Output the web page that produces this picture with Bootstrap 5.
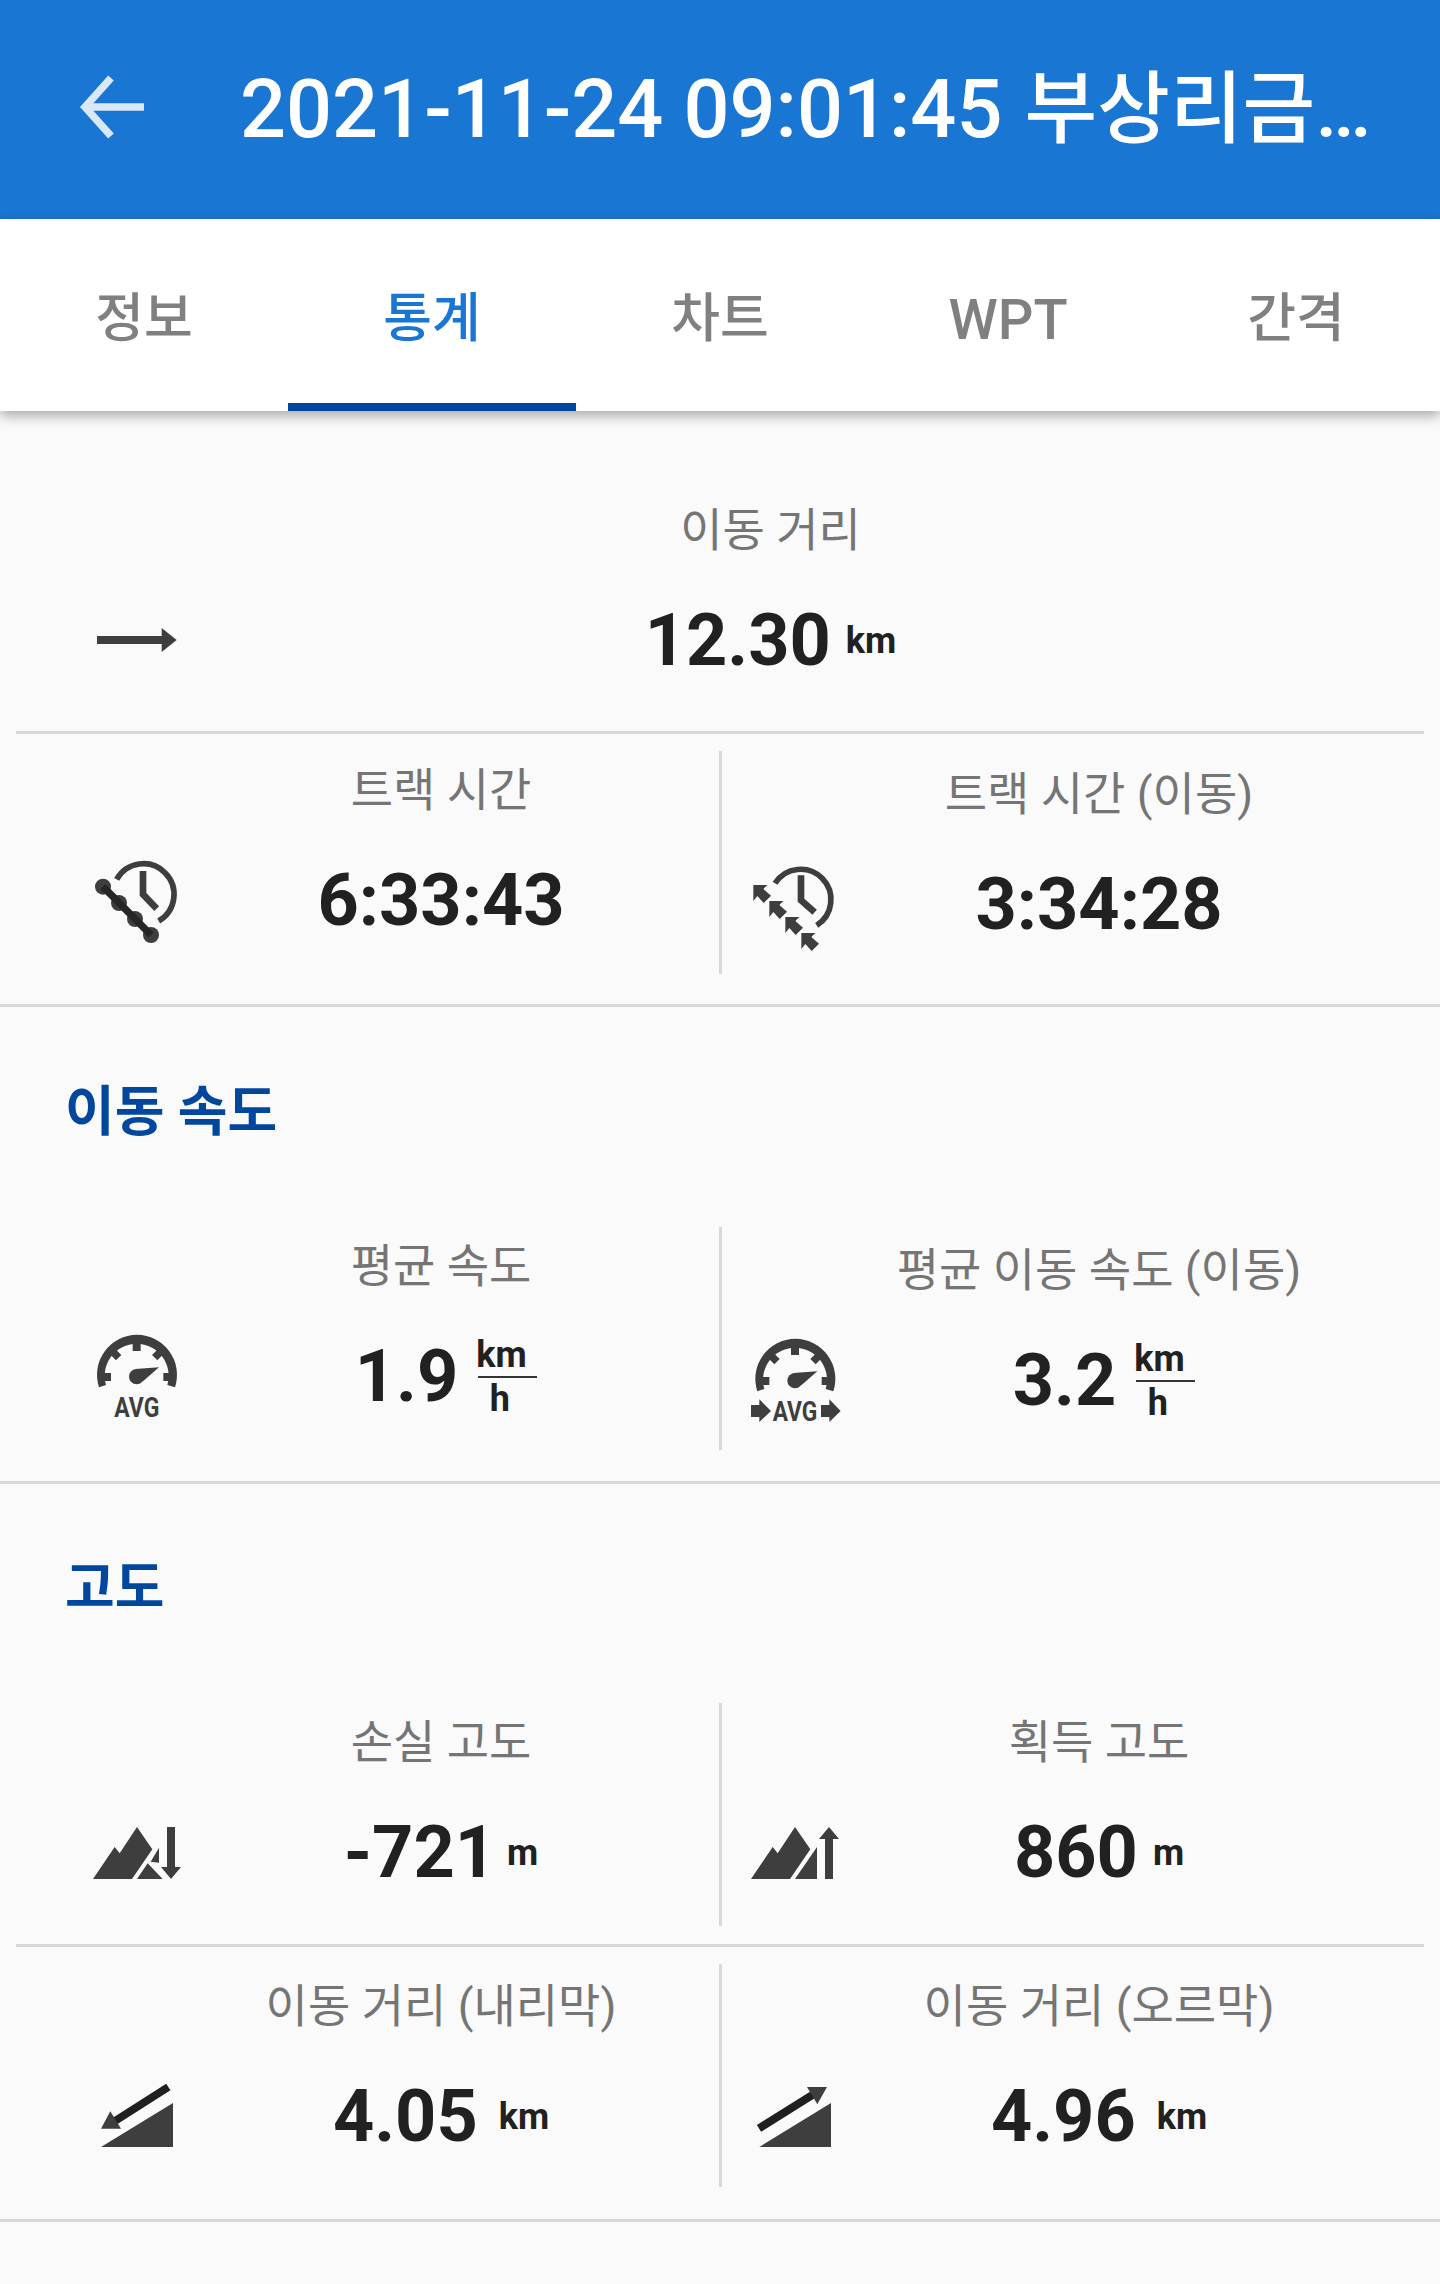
<!doctype html>
<html lang="ko">

<head>
  <meta charset="utf-8" />
  <meta name="viewport" content="width=device-width, initial-scale=1" />
  <title>트랙 통계</title>
  <link href="https://cdn.jsdelivr.net/npm/bootstrap@5.3.5/dist/css/bootstrap.min.css" rel="stylesheet" />
  <style>
    body {
      background-color: #fafafa;
      font-family: Roboto, "Noto Sans CJK KR", sans-serif;
      min-height: 2284px;
    }

    .app-bar {
      background-color: #1976d2;
      height: 219px;
      color: #fff;
    }

    .back-btn {
      width: 240px;
      padding-left: 78px;
      margin-top: -6px;
    }

    .app-title {
      font-size: 81px;
      font-weight: 500;
      line-height: 1.2;
    }

    .title-place {
      font-size: 79px;
      margin-left: 2px;
    }

    .tab-strip {
      background-color: #fff;
      height: 192px;
      box-shadow: 0 5px 12px rgba(0, 0, 0, .32);
      position: relative;
    }

    .tab-strip .nav-link {
      height: 192px;
      color: #808080;
      font-size: 53px;
      font-weight: 500;
      line-height: 1;
      padding: 17px 0 0;
      border-radius: 0;
      border-bottom: 8px solid transparent;
    }

    .tab-strip .nav-link.active {
      color: #1976d2;
      border-bottom-color: #01479d;
    }

    .tab-strip .nav-link.wpt-tab {
      font-size: 56px;
    }

    .stat-block {
      border-bottom: 3px solid #d8d8d8;
    }

    .stat-rule {
      height: 3px;
      background-color: #d8d8d8;
      margin: 0 16px;
    }

    .first-block {
      padding-top: 80px;
      padding-bottom: 0;
    }

    .time-block {
      padding-top: 17px;
      padding-bottom: 30px;
    }

    .speed-block {
      padding-bottom: 31px;
    }

    .alt-block {
      padding-bottom: 18px;
    }

    .descent-block {
      padding-top: 17px;
      padding-bottom: 32px;
    }

    .group-title {
      color: #01479d;
      font-size: 54px;
      font-weight: 700;
      line-height: 72px;
      padding-left: 65px;
      padding-top: 70px;
      margin: 0;
    }

    .speed-title {
      height: 220px;
    }

    .alt-title {
      height: 219px;
      padding-top: 69px;
    }

    .stat-cell {
      height: 223px;
    }

    .first-cell {
      height: 223px;
      padding: 0 91px 0 96px;
      margin-bottom: 17px;
    }

    .cell-left {
      width: 719px;
      padding: 0 29px 0 96px;
    }

    .cell-right {
      width: 721px;
      padding: 0 90px 0 30px;
      border-left: 3px solid #d8d8d8;
    }

    .stat-icon {
      width: 96px;
      height: 120px;
      margin-top: 84px;
      flex: none;
      color: #3e3e3e;
      overflow: visible;
    }

    .stat-label {
      color: #757575;
      font-size: 46px;
      line-height: 72px;
      padding-top: 3px;
    }

    .stat-value {
      color: #212121;
      font-size: 72px;
      font-weight: 700;
      line-height: 84px;
      margin-top: 33px;
    }

    .stat-unit {
      font-size: 36px;
      font-weight: 700;
      margin-left: 15px;
    }

    .unit-tight {
      margin-left: 11px;
    }

    .unit-wide {
      margin-left: 21px;
    }

    .unit-frac {
      font-size: 36px;
      font-weight: 700;
      line-height: 38px;
      margin-left: 14px;
      width: 55px;
    }

    .unit-frac span:first-child {
      margin-left: -6px;
      margin-right: -10px;
      text-align: left;
      text-indent: 10px;
    }

    .unit-frac span:first-child::after {
      content: "";
      display: block;
      height: 1.5px;
      background-color: #333333;
      margin: 2px 0 2px 12px;
    }

    .nudge-down {
      padding-top: 4px;
    }

    .nudge-more {
      padding-top: 3px;
    }
  </style>
</head>

<body>
  <header class="app-bar d-flex align-items-center">
    <div class="back-btn">
      <svg width="72" height="72" viewBox="0 0 72 72" fill="none" stroke="#d9e8f8" stroke-width="7.5">
        <path d="M66 36H8M33 7L7 36l26 29" />
      </svg>
    </div>
    <div class="app-title text-nowrap">2021-11-24 09:01:45 <span class="title-place">부상리금…</span></div>
  </header>

  <ul class="nav nav-justified tab-strip">
    <li class="nav-item"><a class="nav-link d-flex align-items-center justify-content-center" href="#">정보</a></li>
    <li class="nav-item"><a class="nav-link active d-flex align-items-center justify-content-center" href="#">통계</a></li>
    <li class="nav-item"><a class="nav-link d-flex align-items-center justify-content-center" href="#">차트</a></li>
    <li class="nav-item"><a class="nav-link wpt-tab d-flex align-items-center justify-content-center" href="#">WPT</a></li>
    <li class="nav-item"><a class="nav-link d-flex align-items-center justify-content-center" href="#">간격</a></li>
  </ul>

  <section class="first-block">
    <div class="first-cell d-flex">
      <svg class="stat-icon" viewBox="108 -45 288 360" fill="currentColor">
        <path d="M111 138H305V114L350 150L305 186V162H111Z" />
      </svg>
      <div class="flex-grow-1 text-center">
        <div class="stat-label">이동 거리</div>
        <div class="stat-value d-flex justify-content-center align-items-center">12.30<span class="stat-unit">km</span></div>
      </div>
    </div>
    <div class="stat-rule"></div>
  </section>

  <section class="stat-block time-block d-flex">
    <div class="stat-cell cell-left d-flex">
      <svg class="stat-icon" viewBox="108 -18 288 360" fill="currentColor">
        <path d="M170 115A92 92 0 1 1 296 240" fill="none" stroke="currentColor" stroke-width="17" />
        <path d="M249 90V160L290 203" fill="none" stroke="currentColor" stroke-width="20" />
        <circle cx="129" cy="137" r="24" />
        <circle cx="177" cy="186" r="24" />
        <circle cx="225" cy="234" r="24" />
        <circle cx="273" cy="282" r="24" />
        <path d="M129 137L273 282" stroke="#262626" stroke-width="22" />
      </svg>
      <div class="flex-grow-1 text-center">
        <div class="stat-label">트랙 시간</div>
        <div class="stat-value">6:33:43</div>
      </div>
    </div>
    <div class="stat-cell cell-right d-flex">
      <svg class="stat-icon" viewBox="66 -18 288 360" fill="currentColor">
        <path d="M135 127A91 91 0 1 1 260 253" fill="none" stroke="currentColor" stroke-width="17" />
        <path d="M213 103V178L254 214" fill="none" stroke="currentColor" stroke-width="20" />
        <path d="M70 132H112L100 144L123 164L101 186L82 165L70 180Z" />
        <path d="M70 132H112L100 144L123 164L101 186L82 165L70 180Z" transform="translate(48 48)" />
        <path d="M70 132H112L100 144L123 164L101 186L82 165L70 180Z" transform="translate(96 96)" />
        <path d="M70 132H112L100 144L123 164L101 186L82 165L70 180Z" transform="translate(144 144)" />
      </svg>
      <div class="flex-grow-1 text-center nudge-down">
        <div class="stat-label">트랙 시간 (이동)</div>
        <div class="stat-value">3:34:28</div>
      </div>
    </div>
  </section>

  <section class="stat-block speed-block">
    <h2 class="group-title speed-title">이동 속도</h2>
    <div class="d-flex">
      <div class="stat-cell cell-left d-flex">
        <svg class="stat-icon" viewBox="108 0 288 360" fill="currentColor">
          <path d="M117 229A120 120 0 1 1 345 229L322 222A96 96 0 1 0 138 222Z" />
          <path d="M218 95H242V120H218ZM130 186H153V210H130ZM310 186H333V210H310ZM150 130L166 114L184 132L168 148ZM276 132L294 114L310 130L292 148Z" />
          <circle cx="230" cy="197" r="23" />
          <path d="M226 174L297 169L250 210Z" />
          <text x="163" y="318" font-family="Roboto, sans-serif" font-weight="700" font-size="84" textLength="135" lengthAdjust="spacingAndGlyphs">AVG</text>
        </svg>
        <div class="flex-grow-1 text-center">
          <div class="stat-label">평균 속도</div>
          <div class="stat-value d-flex justify-content-center align-items-center">1.9<span class="unit-frac d-inline-flex flex-column text-center"><span>km</span><span>h</span></span></div>
        </div>
      </div>
      <div class="stat-cell cell-right d-flex">
        <svg class="stat-icon" viewBox="66 0 288 360" fill="currentColor">
          <path d="M82 241A120 120 0 1 1 310 241L287 234A96 96 0 1 0 103 234Z" />
          <path d="M183 107H207V132H183ZM95 198H118V222H95ZM275 198H298V222H275ZM115 142L131 126L149 144L133 160ZM241 144L259 126L275 142L257 160Z" />
          <circle cx="195" cy="209" r="23" />
          <path d="M191 186L262 181L215 222Z" />
          <text x="128" y="330" font-family="Roboto, sans-serif" font-weight="700" font-size="84" textLength="134" lengthAdjust="spacingAndGlyphs">AVG</text>
          <path d="M63 282H88V265L123 300L88 333V318H63ZM273 282H298V265L332 300L298 333V318H273Z" />
        </svg>
        <div class="flex-grow-1 text-center nudge-down">
          <div class="stat-label">평균 이동 속도 (이동)</div>
          <div class="stat-value d-flex justify-content-center align-items-center">3.2<span class="unit-frac d-inline-flex flex-column text-center"><span>km</span><span>h</span></span></div>
        </div>
      </div>
    </div>
  </section>

  <section class="stat-block">
    <h2 class="group-title alt-title">고도</h2>
    <div class="d-flex alt-block">
      <div class="stat-cell cell-left d-flex">
        <svg class="stat-icon" viewBox="108 -72 288 360" fill="currentColor">
          <path d="M99 204L164 108L179 127L231 48L277 115L216 204Z" />
          <path d="M231 204L263 157L308 204ZM272 152L297 110V155Z" />
          <path d="M321 48H345V168H363L333 204L303 168H321Z" />
        </svg>
        <div class="flex-grow-1 text-center">
          <div class="stat-label">손실 고도</div>
          <div class="stat-value d-flex justify-content-center align-items-center">-721<span class="stat-unit unit-tight">m</span></div>
        </div>
      </div>
      <div class="stat-cell cell-right d-flex">
        <svg class="stat-icon" viewBox="66 -72 288 360" fill="currentColor">
          <path d="M63 204L128 108L143 127L195 48L241 115L180 204Z" />
          <path d="M195 204L261 108V204Z" />
          <path d="M285 204V84H267L297 48L327 84H309V204Z" />
        </svg>
        <div class="flex-grow-1 text-center">
          <div class="stat-label">획득 고도</div>
          <div class="stat-value d-flex justify-content-center align-items-center">860<span class="stat-unit">m</span></div>
        </div>
      </div>
    </div>
    <div class="stat-rule"></div>
    <div class="d-flex descent-block">
      <div class="stat-cell cell-left d-flex">
        <svg class="stat-icon" viewBox="108 21 288 360" fill="currentColor">
          <path d="M123 318L339 186V318Z" />
          <path d="M325 138L165 240" stroke="#1f1f1f" stroke-width="24" />
          <path d="M123 263L151 211L183 263Z" />
        </svg>
        <div class="flex-grow-1 text-center nudge-more">
          <div class="stat-label">이동 거리 (내리막)</div>
          <div class="stat-value d-flex justify-content-center align-items-center">4.05<span class="stat-unit unit-wide">km</span></div>
        </div>
      </div>
      <div class="stat-cell cell-right d-flex">
        <svg class="stat-icon" viewBox="66 21 288 360" fill="currentColor">
          <path d="M88 318L303 186V318Z" />
          <path d="M87 262L250 160" stroke="#1f1f1f" stroke-width="24" />
          <path d="M231 138H291L262 190Z" />
        </svg>
        <div class="flex-grow-1 text-center nudge-more">
          <div class="stat-label">이동 거리 (오르막)</div>
          <div class="stat-value d-flex justify-content-center align-items-center">4.96<span class="stat-unit unit-wide">km</span></div>
        </div>
      </div>
    </div>
  </section>

  <script src="https://cdn.jsdelivr.net/npm/bootstrap@5.3.5/dist/js/bootstrap.bundle.min.js"></script>
</body>

</html>
